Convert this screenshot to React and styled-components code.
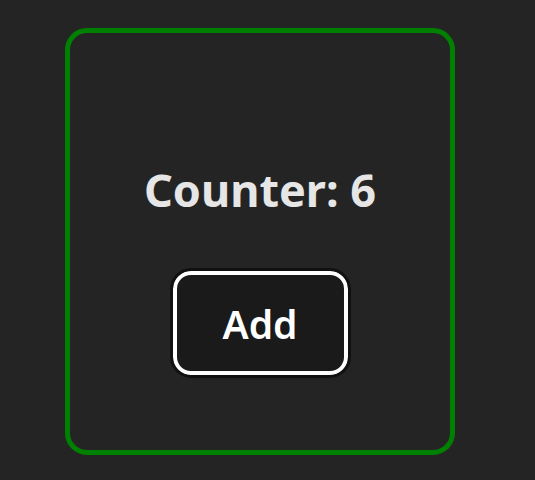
import React, { useState } from 'react';
import styled, { createGlobalStyle } from 'styled-components';

const GlobalStyle = createGlobalStyle`
  html, body {
    margin: 0;
    background: #242424;
  }
  body {
    font-family: "Noto Sans", "Open Sans", sans-serif;
  }
`;

const Page = styled.div`
  width: 535px;
  height: 480px;
  padding: 28px 0 0 65px;
  box-sizing: border-box;
`;

const Card = styled.div`
  width: 390px;
  height: 427px;
  box-sizing: border-box;
  border: 5px solid #008000;
  border-radius: 22px;
  display: flex;
  flex-direction: column;
  align-items: center;
  padding-top: 130px;
`;

const Title = styled.h1`
  margin: 0;
  font-size: 45px;
  font-weight: 700;
  color: #e6e6e6;
  line-height: 1.2;
`;

const AddButton = styled.button`
  margin-top: 54px;
  width: 175px;
  height: 104px;
  box-sizing: border-box;
  background: #1a1a1a;
  color: #ffffff;
  border: 4px solid #ffffff;
  outline: 3px solid #111111;
  border-radius: 18px;
  font-family: inherit;
  font-size: 39px;
  font-weight: 600;
  cursor: pointer;
`;

export default function App() {
  const [count, setCount] = useState(6);
  return (
    <>
      <GlobalStyle />
      <Page>
        <Card>
          <Title>Counter: {count}</Title>
          <AddButton onClick={() => setCount(count + 1)}>Add</AddButton>
        </Card>
      </Page>
    </>
  );
}
